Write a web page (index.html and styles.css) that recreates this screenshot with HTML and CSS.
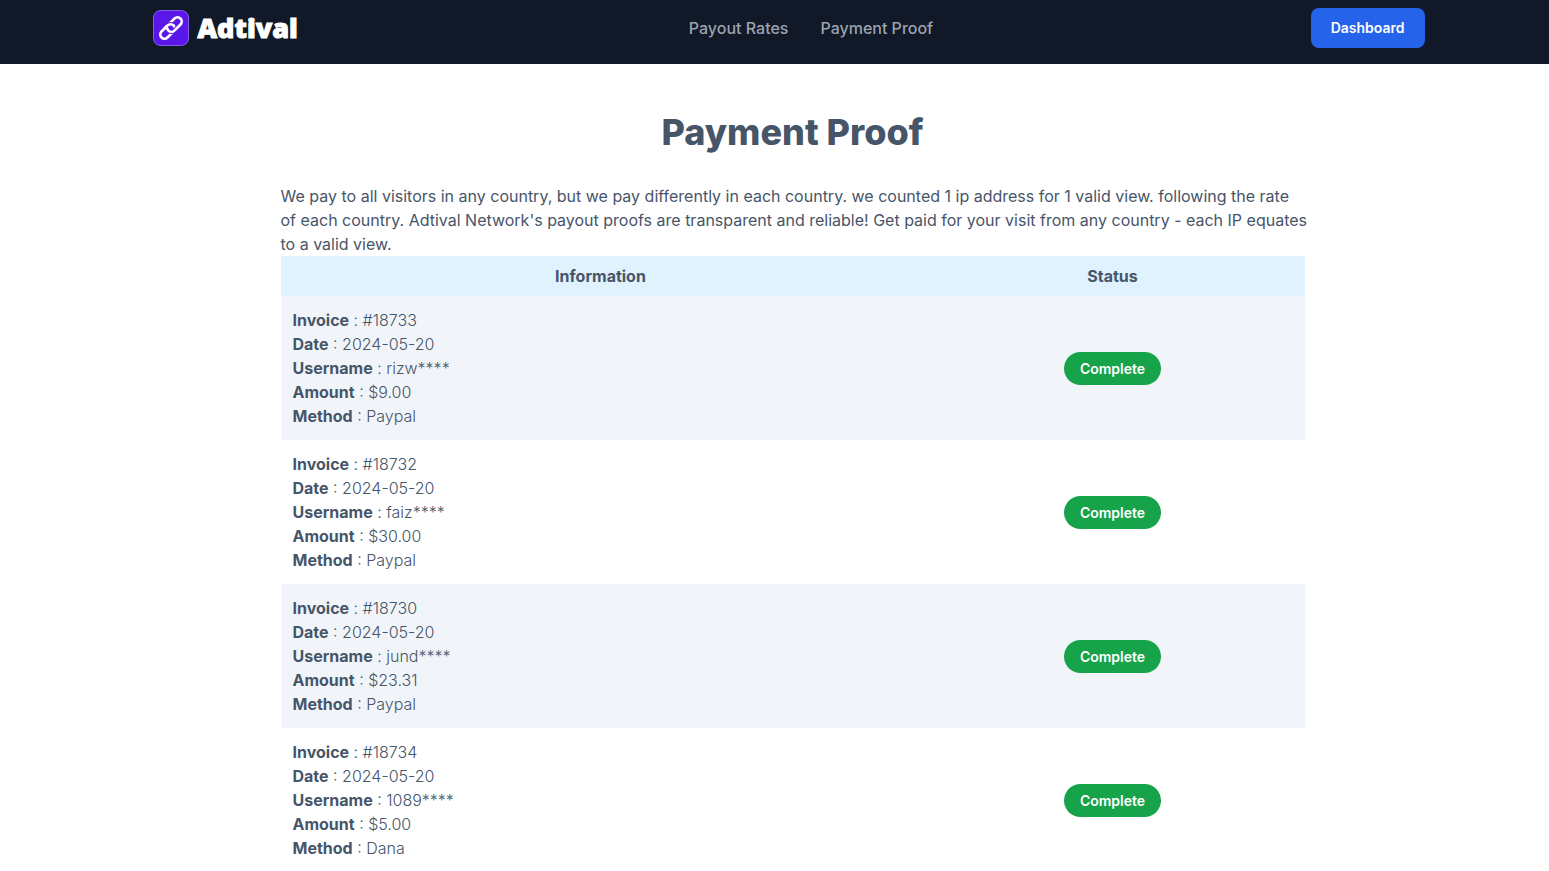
FILE: index.html
```html
<!DOCTYPE html>
<html lang="en">
<head>
<meta charset="utf-8">
<meta name="viewport" content="width=device-width, initial-scale=1">
<title>Payment Proof - Adtival</title>
<link rel="stylesheet" href="styles.css">
</head>
<body>
<header class="site-header">
  <div class="header-inner">
    <a class="brand" href="#">
      <svg class="brand-icon" viewBox="0 0 36 36" aria-hidden="true">
        <rect x=".5" y=".5" width="35" height="35" rx="7" fill="#5b17ea" stroke="#8460e8"/>
        <g transform="rotate(-45 18 18)" fill="none" stroke="#fff" stroke-width="2.6">
          <rect x="4.6" y="13.8" width="17" height="8.4" rx="4.2"/>
          <path d="M14.4 18a4.2 4.2 0 0 0 4.2 4.2h5" stroke="#5b17ea" stroke-width="4.4"/>
          <rect x="14.4" y="13.8" width="17" height="8.4" rx="4.2"/>
          <path d="M16.5 13.8h.9a4.2 4.2 0 0 1 4.2 4.2" stroke="#5b17ea" stroke-width="4.4"/>
          <path d="M12.4 13.8h5a4.2 4.2 0 0 1 4.2 4.2v.6"/>
        </g>
      </svg>
      <span class="brand-name">Adtival</span>
    </a>
    <nav class="nav">
      <a class="nav-link" href="#">Payout Rates</a>
      <a class="nav-link" href="#">Payment Proof</a>
    </nav>
    <a class="dashboard" href="#">Dashboard</a>
  </div>
</header>
<main class="content">
  <h1 class="title">Payment Proof</h1>
  <p class="intro">We pay to all visitors in any country, but we pay differently in each country. we counted 1 ip address for 1 valid view. following the rate <br>of each country. Adtival Network's payout proofs are transparent and reliable! Get paid for your visit from any country - each IP equates <br>to a valid view.</p>
  <table class="proofs">
    <thead>
      <tr><th class="col-info" scope="col">Information</th><th scope="col">Status</th></tr>
    </thead>
    <tbody>
      <tr>
        <td><b>Invoice</b> : #18733<br><b>Date</b> : 2024-05-20<br><b>Username</b> : rizw****<br><b>Amount</b> : $9.00<br><b>Method</b> : Paypal</td>
        <td class="status"><span class="badge">Complete</span></td>
      </tr>
      <tr>
        <td><b>Invoice</b> : #18732<br><b>Date</b> : 2024-05-20<br><b>Username</b> : faiz****<br><b>Amount</b> : $30.00<br><b>Method</b> : Paypal</td>
        <td class="status"><span class="badge">Complete</span></td>
      </tr>
      <tr>
        <td><b>Invoice</b> : #18730<br><b>Date</b> : 2024-05-20<br><b>Username</b> : jund****<br><b>Amount</b> : $23.31<br><b>Method</b> : Paypal</td>
        <td class="status"><span class="badge">Complete</span></td>
      </tr>
      <tr>
        <td><b>Invoice</b> : #18734<br><b>Date</b> : 2024-05-20<br><b>Username</b> : 1089****<br><b>Amount</b> : $5.00<br><b>Method</b> : Dana</td>
        <td class="status"><span class="badge">Complete</span></td>
      </tr>
    </tbody>
  </table>
</main>
</body>
</html>
```

FILE: styles.css
```css
* { box-sizing: border-box; }
body {
  margin: 0;
  background: #fff;
  color: #475569;
  font: 300 16px/24px Inter, "Open Sans", sans-serif;
}
a { text-decoration: none; }
.site-header {
  padding: 8px 0 16px 36px;
  background: #111827;
}
.header-inner {
  display: grid;
  grid-template-columns: 1fr auto 1fr;
  align-items: center;
  max-width: 1280px;
  margin: 0 auto;
  padding-right: 8px;
}
.brand {
  display: flex;
  align-items: center;
  gap: 9px;
  color: #fff;
}
.brand-icon { width: 36px; height: 36px; }
.brand-name {
  font: 800 27px/36px "Open Sans", sans-serif;
  -webkit-text-stroke: 1px #fff;
}
.nav { display: flex; gap: 32px; padding-left: 45px; }
.nav-link { color: #9ca3af; font-weight: 500; }
.dashboard {
  justify-self: end;
  padding: 8px 20px;
  border-radius: 8px;
  background: #2563eb;
  color: #fff;
  font-size: 14px;
  font-weight: 600;
}
.content {
  padding: 48px 0 0 36px;
}
.title, .intro, .proofs {
  width: 100%;
  max-width: 1024px;
  margin: 0 auto;
}
.title {
  margin-bottom: 32px;
  font-size: 36px;
  line-height: 40px;
  font-weight: 800;
  text-align: center;
}
.intro { font-weight: 400; }
.intro br { display: none; }
@media (min-width: 1120px) {
  .intro { white-space: nowrap; }
  .intro br { display: inline; }
}
.proofs {
  border-collapse: collapse;
  table-layout: fixed;
}
.col-info { width: 62.5%; }
.proofs th {
  padding: 8px 12px;
  background: #e0f2fe;
  font-weight: 700;
}
.proofs td { padding: 12px; }
.proofs tbody tr:nth-child(odd) { background: #f1f5f9; }
.proofs b { font-weight: 700; }
.proofs .status { text-align: center; }
.badge {
  display: inline-block;
  padding: 8px 16px;
  border-radius: 20px;
  background: #16a34a;
  color: #fff;
  font-size: 14px;
  line-height: 17px;
  font-weight: 600;
  vertical-align: middle;
}
```
